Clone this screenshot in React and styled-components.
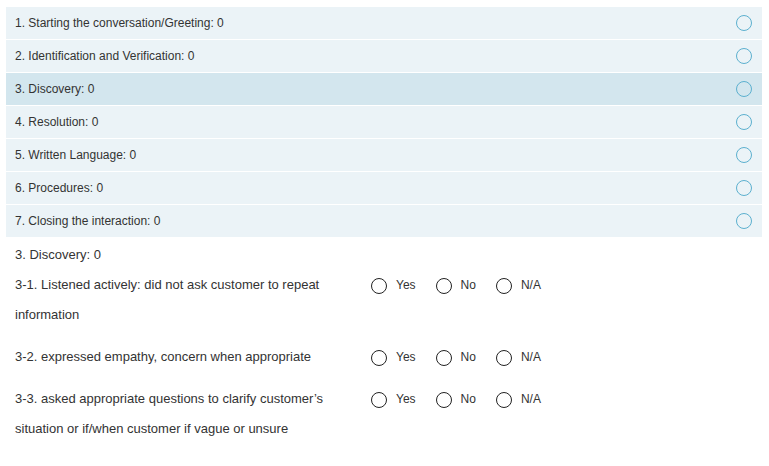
import React from 'react';
import styled, { createGlobalStyle } from 'styled-components';

const GlobalStyle = createGlobalStyle`
  body {
    margin: 0;
    background: #fff;
    font-family: "Liberation Sans", Arial, sans-serif;
    color: #333;
  }
`;

const Page = styled.div`
  padding: 7px 7px 0 6px;
`;

const SectionList = styled.ul`
  margin: 0;
  padding: 0;
  list-style: none;
  display: flex;
  flex-direction: column;
  gap: 1px;
`;

const SectionItem = styled.li`
  display: flex;
  align-items: center;
  justify-content: space-between;
  height: 32px;
  padding: 0 10px 0 9px;
  background: ${({ active }) => (active ? '#d3e6ee' : '#ebf3f7')};
  font-size: 12px;
`;

const StatusDot = styled.span`
  width: 14px;
  height: 14px;
  border: 1.5px solid #5cb0cf;
  border-radius: 50%;
`;

const Detail = styled.section`
  padding: 3px 0 0 9px;
  font-size: 13px;
`;

const DetailTitle = styled.div`
  line-height: 30px;
`;

const Question = styled.div`
  display: flex;
  align-items: flex-start;
  margin-bottom: 12px;
`;

const QuestionText = styled.div`
  width: 350px;
  line-height: 30px;
`;

const Options = styled.div`
  display: flex;
  align-items: center;
  gap: 20px;
  height: 30px;
  margin-left: 6px;
`;

const Option = styled.label`
  display: flex;
  align-items: center;
  gap: 9px;
  font-size: 12px;
  color: #333;
`;

const RadioCircle = styled.span`
  width: 14px;
  height: 14px;
  border: 1.5px solid #222;
  border-radius: 50%;
  margin-top: 2px;
`;

const sections = [
  '1. Starting the conversation/Greeting: 0',
  '2. Identification and Verification: 0',
  '3. Discovery: 0',
  '4. Resolution: 0',
  '5. Written Language: 0',
  '6. Procedures: 0',
  '7. Closing the interaction: 0',
];

const questions = [
  '3-1. Listened actively: did not ask customer to repeat information',
  '3-2. expressed empathy, concern when appropriate',
  '3-3. asked appropriate questions to clarify customer\u2019s situation or if/when customer if vague or unsure',
];

const choices = ['Yes', 'No', 'N/A'];

const App = () => (
  <>
    <GlobalStyle />
    <Page>
      <SectionList>
        {sections.map((s, i) => (
          <SectionItem key={i} active={i === 2}>
            <span>{s}</span>
            <StatusDot />
          </SectionItem>
        ))}
      </SectionList>
      <Detail>
        <DetailTitle>3. Discovery: 0</DetailTitle>
        {questions.map((q, i) => (
          <Question key={i}>
            <QuestionText>{q}</QuestionText>
            <Options>
              {choices.map((c) => (
                <Option key={c}>
                  <RadioCircle />
                  {c}
                </Option>
              ))}
            </Options>
          </Question>
        ))}
      </Detail>
    </Page>
  </>
);

export default App;
